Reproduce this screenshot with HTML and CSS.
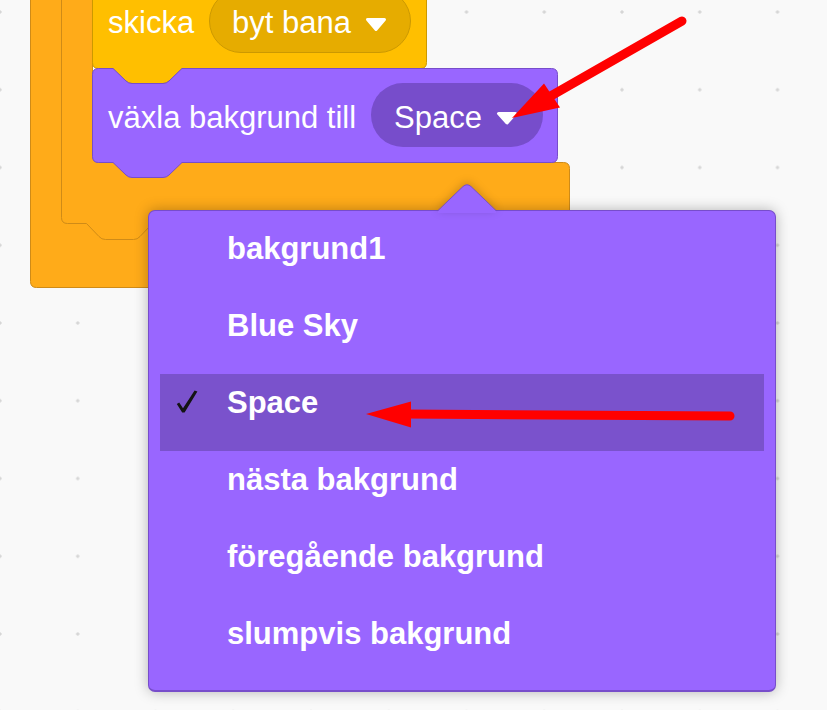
FILE: index.html
```html
<!DOCTYPE html>
<html lang="sv">
<head>
<meta charset="utf-8">
<title>Scratch – växla bakgrund</title>
<link rel="stylesheet" href="styles.css">
</head>
<body>
<div class="workspace">
  <svg class="blocks" width="827" height="710" viewBox="0 0 827 710">
    <!-- outer C block -->
    <path class="orange" d="M30.5,-20 V281.5 Q30.5,287.5 36.5,287.5 H540 V220 H64 V-20 Z"/>
    <!-- inner C block -->
    <path class="orange" d="M61.5,-20 V217.5 Q61.5,223.5 67.5,223.5 H86.5 L99,236.5 Q101.5,239.5 105.5,239.5 H133.5 Q137.5,239.5 140,236.5 L152.5,223.5 H563.5 Q569.5,223.5 569.5,217.5 V168.5 Q569.5,162.5 563.5,162.5 H100 Q92.5,162.5 92.5,155 V-20 Z"/>
    <!-- yellow "skicka" block -->
    <path class="yellow" d="M92.5,-20 V62.5 Q92.5,68.5 98.5,68.5 H113 L126,81 Q128.5,83.5 132,83.5 H163 Q166.5,83.5 169,81 L182,68.5 H420.5 Q426.5,68.5 426.5,62.5 V-20 Z"/>
    <rect class="yellow-pill" x="209.5" y="-10.5" width="201" height="63" rx="31.5"/>
    <text class="label" x="108" y="33">skicka</text>
    <text class="label" x="232" y="33">byt bana</text>
    <path class="caret" d="M367.5,19.5 H384.5 L376,29.5 Z"/>
    <!-- purple "växla bakgrund till" block -->
    <path class="purple" d="M92.5,74.5 Q92.5,68.5 98.5,68.5 H113 L126,81 Q128.5,83.5 132,83.5 H163 Q166.5,83.5 169,81 L182,68.5 H551.5 Q557.5,68.5 557.5,74.5 V156.5 Q557.5,162.5 551.5,162.5 H182 L169,175 Q166.5,177.5 163,177.5 H132 Q128.5,177.5 126,175 L113,162.5 H98.5 Q92.5,162.5 92.5,156.5 Z"/>
    <rect class="purple-pill" x="371" y="83" width="172" height="64" rx="32"/>
    <text class="label" x="108" y="128">växla bakgrund till</text>
    <text class="label" x="394" y="128">Space</text>
    <path class="caret" d="M498.5,113.5 H515.5 L507,123 Z"/>
  </svg>

  <div class="dropdown">
    <svg class="pointer" width="60" height="30" viewBox="0 0 60 30">
      <path class="pointer-fill" d="M1,30 V28 L26,3.5 Q30,0 34,3.5 L59,28 V30 Z"/>
      <path class="pointer-edge" d="M1,27.5 L26,3.5 Q30,0 34,3.5 L59,27.5"/>
    </svg>
    <ul class="menu">
      <li class="item"><span class="check"></span><span class="item-text">bakgrund1</span></li>
      <li class="item"><span class="check"></span><span class="item-text">Blue Sky</span></li>
      <li class="item selected">
        <span class="check">
          <svg width="22" height="23" viewBox="0 0 22 23"><path d="M0.8,14 L3.2,12.6 L7,18.2 L18.6,0.6 L21.4,1.4 L8.6,22.4 L6.2,22.4 Z"/></svg>
        </span>
        <span class="item-text">Space</span>
      </li>
      <li class="item"><span class="check"></span><span class="item-text">nästa bakgrund</span></li>
      <li class="item"><span class="check"></span><span class="item-text">föregående bakgrund</span></li>
      <li class="item"><span class="check"></span><span class="item-text">slumpvis bakgrund</span></li>
    </ul>
  </div>

  <svg class="arrows" width="827" height="710" viewBox="0 0 827 710">
    <line x1="682" y1="21" x2="549" y2="97" class="arrow-line"/>
    <polygon points="512,118 544,83.5 560,107.5" class="arrow-head"/>
    <line x1="405" y1="414" x2="730" y2="416" class="arrow-line"/>
    <polygon points="366,414 411,401.5 411,427.5" class="arrow-head"/>
  </svg>
</div>
</body>
</html>
```

FILE: styles.css
```css
html, body {
  margin: 0;
  padding: 0;
}

body {
  background: #f9f9f9;
  font-family: "Liberation Sans", Arial, sans-serif;
}

.workspace {
  position: relative;
  width: 827px;
  height: 710px;
  overflow: hidden;
  background-color: #f9f9f9;
  background-image: radial-gradient(circle, #d6d6d6 0, #d6d6d6 1.3px, rgba(214,214,214,0) 2px);
  background-size: 77.75px 77.75px;
  background-position: -38.875px -26.875px;
}

.blocks {
  position: absolute;
  left: 0;
  top: 0;
}

.orange {
  fill: #ffab19;
  stroke: #cf8b17;
  stroke-width: 1;
}

.yellow {
  fill: #ffbf00;
  stroke: #cc9900;
  stroke-width: 1;
}

.yellow-pill {
  fill: #e6ac00;
  stroke: #cc9900;
  stroke-width: 1;
}

.purple {
  fill: #9966ff;
  stroke: #774dcb;
  stroke-width: 1;
}

.purple-pill {
  fill: #774dcb;
}

.label {
  font-family: "Liberation Sans", Arial, sans-serif;
  font-size: 31px;
  fill: #ffffff;
}

.caret {
  fill: #ffffff;
  stroke: #ffffff;
  stroke-width: 3;
  stroke-linejoin: round;
}

.dropdown {
  position: absolute;
  left: 148px;
  top: 210px;
  width: 628px;
  height: 482px;
  box-sizing: border-box;
  background: #9966ff;
  border: 1px solid #774dcb;
  border-bottom-width: 2px;
  border-radius: 7px;
  box-shadow: 0 0 14px rgba(0, 0, 0, 0.28);
  padding: 9px 11px 8px;
}

.pointer {
  position: absolute;
  left: 288px;
  top: -28px;
  overflow: visible;
  filter: drop-shadow(0 -2px 4px rgba(0, 0, 0, 0.18));
}

.pointer-fill {
  fill: #9966ff;
}

.pointer-edge {
  fill: none;
  stroke: #774dcb;
  stroke-width: 1;
}

.menu {
  list-style: none;
  margin: 0;
  padding: 0;
  display: flex;
  flex-direction: column;
}

.item {
  display: flex;
  align-items: flex-start;
  height: 77px;
  color: #ffffff;
  font-weight: bold;
  font-size: 31px;
}

.item.selected {
  background: #7a52cc;
}

.check {
  width: 67px;
  flex: none;
  box-sizing: border-box;
  padding: 16px 0 0 16px;
  display: flex;
}

.check svg path {
  fill: #141414;
}

.item-text {
  padding-top: 12px;
  line-height: 34px;
  white-space: nowrap;
}

.arrows {
  position: absolute;
  left: 0;
  top: 0;
  pointer-events: none;
}

.arrow-line {
  stroke: #ff0000;
  stroke-width: 9;
  stroke-linecap: round;
}

.arrow-head {
  fill: #ff0000;
}
```
